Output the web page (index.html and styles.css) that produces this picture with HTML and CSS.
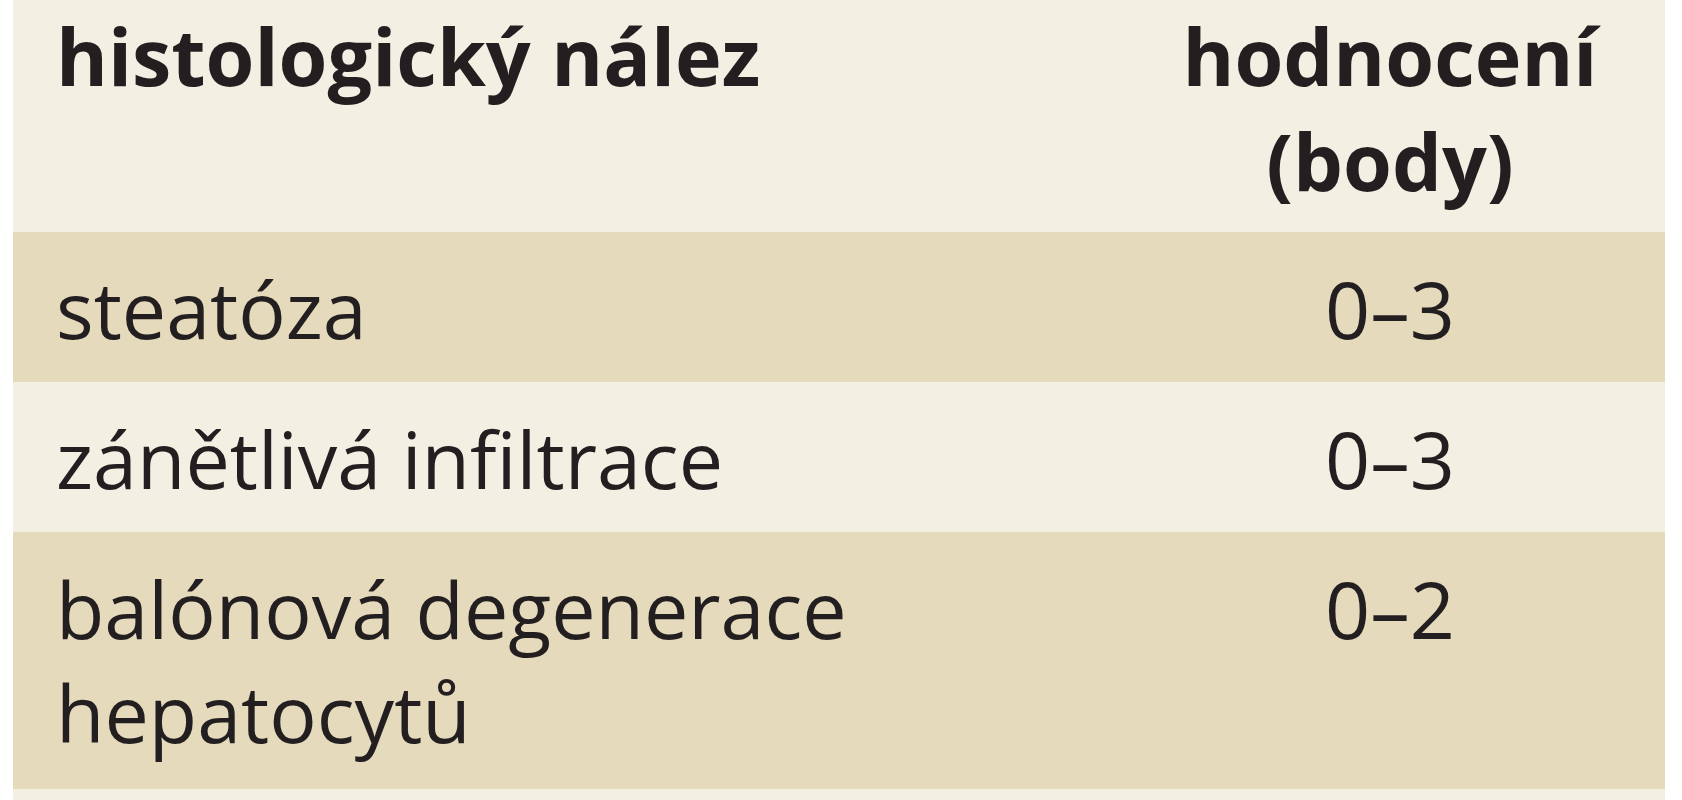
FILE: index.html
```html
<!DOCTYPE html>
<html lang="cs">
<head>
<meta charset="utf-8">
<title>Histologický nález</title>
<link rel="stylesheet" href="styles.css">
</head>
<body>
<table class="score-table">
  <thead>
    <tr class="row-head">
      <th class="col-finding">histologický nález</th>
      <th class="col-score">hodnocení (body)</th>
    </tr>
  </thead>
  <tbody>
    <tr class="row-dark">
      <td class="col-finding">steatóza</td>
      <td class="col-score">0–3</td>
    </tr>
    <tr class="row-light">
      <td class="col-finding">zánětlivá infiltrace</td>
      <td class="col-score">0–3</td>
    </tr>
    <tr class="row-dark row-tall">
      <td class="col-finding">balónová degenerace hepatocytů</td>
      <td class="col-score">0–2</td>
    </tr>
    <tr class="row-light row-tail">
      <td class="col-finding"></td>
      <td class="col-score"></td>
    </tr>
  </tbody>
</table>
</body>
</html>
```

FILE: styles.css
```css
html, body {
  margin: 0;
  padding: 0;
  background: #ffffff;
}

body {
  font-family: "Open Sans", "Noto Sans", sans-serif;
  color: #231f20;
  overflow: hidden;
  height: 800px;
}

.score-table {
  margin-left: 13px;
  width: 1652px;
  border-collapse: collapse;
  border-spacing: 0;
  table-layout: fixed;
}

.score-table th,
.score-table td {
  padding: 0;
  vertical-align: top;
  font-size: 79px;
  box-sizing: border-box;
}

.col-finding {
  width: 1102px;
  text-align: left;
  padding-left: 43px !important;
}

.col-score {
  text-align: center;
}

.row-head {
  background: #f4efe3;
}

.row-head th {
  font-weight: 700;
  line-height: 105px;
  padding-top: 3px !important;
  padding-bottom: 19px !important;
}

.row-dark {
  background: #e6dabc;
}

.row-light {
  background: #f4efe3;
}

.score-table td {
  font-weight: 400;
  line-height: 103px;
  padding-top: 25px !important;
  padding-bottom: 22px !important;
}

.row-tall td {
  line-height: 104px;
  padding-bottom: 24px !important;
}

.row-tail td {
  height: 40px;
  padding: 0 !important;
}
```
